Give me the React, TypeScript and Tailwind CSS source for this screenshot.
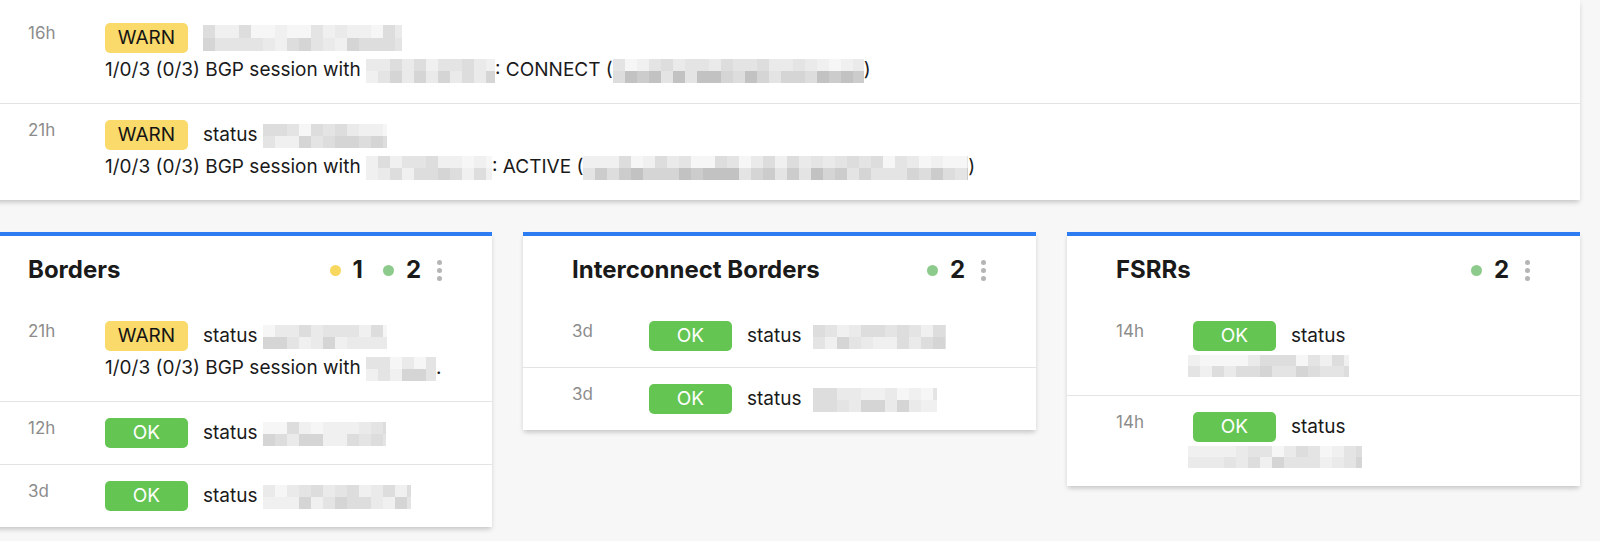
import type { ReactNode } from "react";

// оттенки для "замазанных" значений
const shades = [
  "bg-[#f6f6f6]",
  "bg-[#f0f0f0]",
  "bg-[#eaeaea]",
  "bg-[#e4e4e4]",
  "bg-[#dddddd]",
  "bg-[#d5d5d5]",
  "bg-[#cccccc]",
  "bg-[#c2c2c2]",
];

function Pixels({ w, h = 24, seed, dark = false }: { w: number; h?: number; seed: number; dark?: boolean }) {
  const cols = Math.ceil(w / 12);
  let s = seed * 7919 + 13;
  const rnd = () => {
    s = (s * 9301 + 49297) % 233280;
    return s / 233280;
  };
  const top = Array.from({ length: cols }, () => shades[Math.floor(rnd() * 5)]);
  const bottom = Array.from({ length: cols }, () =>
    dark ? shades[3 + Math.floor(rnd() * 5)] : shades[1 + Math.floor(rnd() * 5)]
  );
  return (
    <span className="inline-flex flex-col overflow-hidden align-middle" style={{ width: w, height: h }}>
      <span className="flex flex-1">
        {top.map((c, i) => (
          <span key={i} className={`${c} w-3 shrink-0`} />
        ))}
      </span>
      <span className="flex flex-1">
        {bottom.map((c, i) => (
          <span key={i} className={`${c} w-3 shrink-0`} />
        ))}
      </span>
    </span>
  );
}

function Badge({ level }: { level: "WARN" | "OK" }) {
  const color = level === "WARN" ? "bg-[#f9da6b] text-[#141414]" : "bg-[#65c553] text-white";
  return (
    <span className={`${color} w-[83px] h-[30px] shrink-0 rounded-[5px] flex items-center justify-center text-[19px]`}>
      {level}
    </span>
  );
}

type RowProps = {
  time: string;
  level: "WARN" | "OK";
  first?: boolean;
  line1?: ReactNode;
  line2?: ReactNode;
  below?: ReactNode;
  last?: boolean;
};

function Row({ time, level, first, line1, line2, below, last }: RowProps) {
  const pb = line2 ? "pb-5" : below ? "pb-[18px]" : "pb-4";
  return (
    <div className={`flex items-start pl-[49px] ${first ? "pt-[23px]" : "pt-4"} ${pb} ${last ? "" : "border-b border-[#e4e4e4]"}`}>
      <div className="w-[77px] shrink-0 text-[17px] leading-5 text-[#8c8c8c]">{time}</div>
      <div className="flex flex-col">
        <div className="flex items-center gap-[15px] h-[30px]">
          <Badge level={level} />
          <span className="text-[19px] leading-[26px] whitespace-nowrap">{line1}</span>
        </div>
        {line2 && <div className="mt-1 text-[19px] leading-[26px] whitespace-nowrap">{line2}</div>}
        {below && <div className="mt-1 -ml-[5px] h-[22px] flex">{below}</div>}
      </div>
    </div>
  );
}

function Dot({ color }: { color: string }) {
  return <span className={`${color} w-[11px] h-[11px] rounded-full`} />;
}

function Kebab() {
  return (
    <span className="flex flex-col gap-[3px] ml-4">
      <span className="w-[5px] h-[5px] rounded-full bg-[#b5b5b5]" />
      <span className="w-[5px] h-[5px] rounded-full bg-[#b5b5b5]" />
      <span className="w-[5px] h-[5px] rounded-full bg-[#b5b5b5]" />
    </span>
  );
}

function Card({ title, warn, ok, children }: { title: string; warn?: number; ok: number; children: ReactNode }) {
  return (
    <div className="bg-white border-t-4 border-[#2e7cf1] shadow-[0_3px_5px_-1px_rgba(0,0,0,0.22)]">
      <div className="flex items-center justify-between pt-5 pb-[21px] pl-[49px] pr-[50px]">
        <h2 className="text-[24px] leading-7 font-bold text-[#1a1a1a]">{title}</h2>
        <div className="flex items-center text-[24px] leading-7 font-bold text-[#1a1a1a]">
          {warn !== undefined && (
            <>
              <Dot color="bg-[#f8d75e]" />
              <span className="ml-3 mr-5">{warn}</span>
            </>
          )}
          <Dot color="bg-[#8ccb8b]" />
          <span className="ml-3">{ok}</span>
          <Kebab />
        </div>
      </div>
      {children}
    </div>
  );
}

export default function App() {
  return (
    <div className="w-[1600px] h-[541px] overflow-hidden bg-[#f7f7f7] font-['Inter',sans-serif] text-[#1a1a1a]">
      <div className="w-[1601px] -ml-[21px]">
        {/* ЛЕНТА СОБЫТИЙ */}
        <div className="bg-white shadow-[0_3px_5px_-1px_rgba(0,0,0,0.22)]">
          <Row
            time="16h"
            level="WARN"
            first
            line1={<Pixels w={199} h={26} seed={3} />}
            line2={
              <>
                1/0/3 (0/3) BGP session with <Pixels w={129} seed={5} />: CONNECT (<Pixels w={251} seed={8} dark />)
              </>
            }
          />
          <Row
            time="21h"
            level="WARN"
            last
            line1={
              <>
                status <Pixels w={124} seed={11} />
              </>
            }
            line2={
              <>
                1/0/3 (0/3) BGP session with <Pixels w={126} seed={13} />: ACTIVE (<Pixels w={385} seed={17} dark />)
              </>
            }
          />
        </div>

        {/* КАРТОЧКИ ГРУПП */}
        <div className="mt-8 grid grid-cols-3 items-start gap-[31px]">
          <Card title="Borders" warn={1} ok={2}>
            <Row
              time="21h"
              level="WARN"
              line1={
                <>
                  status <Pixels w={124} seed={21} />
                </>
              }
              line2={
                <>
                  1/0/3 (0/3) BGP session with <Pixels w={70} seed={23} />.
                </>
              }
            />
            <Row
              time="12h"
              level="OK"
              line1={
                <>
                  status <Pixels w={123} seed={29} />
                </>
              }
            />
            <Row
              time="3d"
              level="OK"
              last
              line1={
                <>
                  status <Pixels w={148} seed={31} />
                </>
              }
            />
          </Card>

          <Card title="Interconnect Borders" ok={2}>
            <Row
              time="3d"
              level="OK"
              line1={
                <>
                  status <span className="ml-1.5"><Pixels w={133} seed={37} /></span>
                </>
              }
            />
            <Row
              time="3d"
              level="OK"
              last
              line1={
                <>
                  status <span className="ml-1.5"><Pixels w={124} seed={41} /></span>
                </>
              }
            />
          </Card>

          <Card title="FSRRs" ok={2}>
            <Row time="14h" level="OK" line1="status" below={<Pixels w={161} h={22} seed={43} />} />
            <Row time="14h" level="OK" last line1="status" below={<Pixels w={174} h={22} seed={47} />} />
          </Card>
        </div>
      </div>
    </div>
  );
}
